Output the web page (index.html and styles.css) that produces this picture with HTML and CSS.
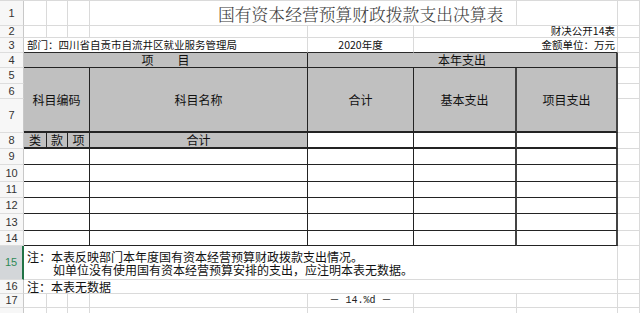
FILE: index.html
```html
<!DOCTYPE html>
<html lang="zh-CN">
<head>
<meta charset="utf-8">
<title>国有资本经营预算财政拨款支出决算表</title>
<link rel="stylesheet" href="styles.css">
</head>
<body>
<div class="sheet">
  <!-- row 1 -->
  <div class="c rh">1</div>
  <div class="c"></div><div class="c"></div><div class="c"></div>
  <div class="c s3 title">国有资本经营预算财政拨款支出决算表</div>
  <div class="c"></div><div class="c"></div>
  <!-- row 2 -->
  <div class="c rh">2</div>
  <div class="c"></div><div class="c"></div><div class="c"></div><div class="c"></div><div class="c"></div>
  <div class="c s2 small right">财决公开14表</div>
  <div class="c"></div>
  <!-- row 3 -->
  <div class="c rh">3</div>
  <div class="c s4 small left topd">部门：四川省自贡市自流井区就业服务管理局</div>
  <div class="c small topd">2020年度</div>
  <div class="c s2 small right topd">金额单位：万元</div>
  <div class="c"></div>
  <!-- row 4 -->
  <div class="c rh">4</div>
  <div class="c s4 g dk">项　　目</div>
  <div class="c s3 g dk rk2">本年支出</div>
  <div class="c"></div>
  <!-- rows 5-7 -->
  <div class="c rh">5</div>
  <div class="c s3 rs3 g dk bb2">科目编码</div>
  <div class="c rs3 g dk bb2">科目名称</div>
  <div class="c rs3 g dk bb2">合计</div>
  <div class="c rs3 g dk bb2 rk2">基本支出</div>
  <div class="c rs3 g dk bb2 rk2">项目支出</div>
  <div class="c"></div>
  <div class="c rh">6</div>
  <div class="c"></div>
  <div class="c rh">7</div>
  <div class="c"></div>
  <!-- row 8 -->
  <div class="c rh">8</div>
  <div class="c g dk bb2">类</div>
  <div class="c g dk bb2">款</div>
  <div class="c g dk bb2">项</div>
  <div class="c g dk bb2">合计</div>
  <div class="c dk bb2"></div>
  <div class="c dk bb2 rk2"></div>
  <div class="c dk bb2 rk2"></div>
  <div class="c"></div>
  <!-- rows 9-14 -->
  <div class="c rh">9</div>
  <div class="c s3 dk"></div><div class="c dk"></div><div class="c dk"></div><div class="c dk rk2"></div><div class="c dk rk2"></div>
  <div class="c"></div>
  <div class="c rh">10</div>
  <div class="c s3 dk"></div><div class="c dk"></div><div class="c dk"></div><div class="c dk rk2"></div><div class="c dk rk2"></div>
  <div class="c"></div>
  <div class="c rh">11</div>
  <div class="c s3 dk"></div><div class="c dk"></div><div class="c dk"></div><div class="c dk rk2"></div><div class="c dk rk2"></div>
  <div class="c"></div>
  <div class="c rh">12</div>
  <div class="c s3 dk"></div><div class="c dk"></div><div class="c dk"></div><div class="c dk rk2"></div><div class="c dk rk2"></div>
  <div class="c"></div>
  <div class="c rh">13</div>
  <div class="c s3 dk"></div><div class="c dk"></div><div class="c dk"></div><div class="c dk rk2"></div><div class="c dk rk2"></div>
  <div class="c"></div>
  <div class="c rh">14</div>
  <div class="c s3 dk"></div><div class="c dk"></div><div class="c dk"></div><div class="c dk rk2"></div><div class="c dk rk2"></div>
  <div class="c"></div>
  <!-- row 15 -->
  <div class="c rh on">15</div>
  <div class="c s7 note">
    <div class="line">注：本表反映部门本年度国有资本经营预算财政拨款支出情况。</div>
    <div class="line indent">如单位没有使用国有资本经营预算安排的支出，应注明本表无数据。</div>
  </div>
  <div class="c"></div>
  <!-- row 16 -->
  <div class="c rh">16</div>
  <div class="c s7 left">注：本表无数据</div>
  <div class="c"></div>
  <!-- row 17 -->
  <div class="c rh">17</div>
  <div class="c"></div><div class="c"></div><div class="c"></div><div class="c"></div>
  <div class="c page">－ 14.%d －</div>
  <div class="c"></div><div class="c"></div><div class="c"></div>
  <!-- row 18 -->
  <div class="c rh">18</div>
  <div class="c"></div><div class="c"></div><div class="c"></div><div class="c"></div>
  <div class="c"></div><div class="c"></div><div class="c"></div><div class="c"></div>
</div>
</body>
</html>
```
FILE: styles.css
```css
html, body {
  margin: 0;
  padding: 0;
  background: #ffffff;
}
body {
  width: 640px;
  height: 313px;
  overflow: hidden;
  font-family: "Noto Sans CJK SC", "Noto Sans", sans-serif;
}
.sheet {
  display: grid;
  grid-template-columns: 24px 23px 21px 22px 218px 106px 103px 101px 1fr;
  grid-template-rows: 25px 12px 15px 15px 16px 15px 34px 16px 16px 17px 16px 16px 17px 15px 34px 14px 14px 22px;
  border-top: 1px solid #dadada;
}
.c {
  box-sizing: border-box;
  border-right: 1px solid #dadada;
  border-bottom: 1px solid #dadada;
  display: flex;
  align-items: center;
  justify-content: center;
  white-space: nowrap;
  font-size: 12px;
  line-height: 1;
  color: #111;
  min-width: 0;
}
.s2 { grid-column: span 2; }
.s3 { grid-column: span 3; }
.s4 { grid-column: span 4; }
.s7 { grid-column: span 7; }
.rs3 { grid-row: span 3; }

.rh {
  background: #f7f7f7;
  border-right-color: #c8c8c8;
  border-bottom-color: #dddddd;
  font-family: "Liberation Sans", Arial, sans-serif;
  font-size: 11px;
  color: #333;
}
.rh.on {
  background: #d3d6d9;
  color: #2f8a57;
  border-right: 2px solid #217346;
}

.title {
  justify-content: flex-start;
  padding-left: 128px;
  padding-top: 2px;
  font-family: "Noto Serif CJK SC", "Noto Sans CJK SC", serif;
  font-weight: 300;
  font-size: 16.8px;
  color: #3a3a3a;
}
.small { font-size: 10.5px; }
.right { justify-content: flex-end; padding-right: 2px; }
.left { justify-content: flex-start; padding-left: 3px; }
.topd { border-bottom-color: #2a2a2a; }

.g { background: #c0c0c0; }
.dk { border-right-color: #232323; border-bottom-color: #232323; }
.rk2 { border-right-width: 2px; border-right-color: #444; }
.bb2 { border-bottom-width: 2px; }

.note {
  flex-direction: column;
  align-items: flex-start;
  justify-content: flex-start;
  padding: 4px 0 0 3px;
}
.note .line {
  line-height: 13px;
}
.note .indent { padding-left: 26px; }

.page {
  font-family: "Liberation Mono", "Noto Sans CJK SC", monospace;
  font-size: 10px;
  color: #222;
}
```
